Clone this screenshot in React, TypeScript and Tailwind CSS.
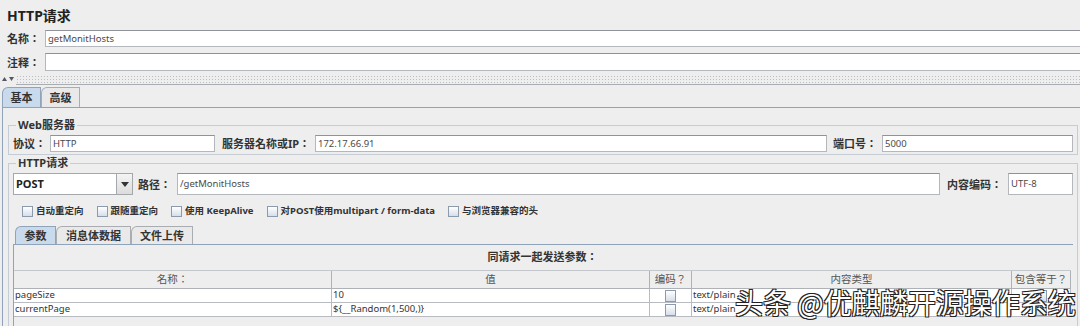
import React from 'react';

const font = "font-['Noto_Sans_CJK_SC','Noto_Sans',sans-serif]";
const latin = "font-['Noto_Sans','Noto_Sans_CJK_SC',sans-serif]";
const tc = "font-['Noto_Sans','Noto_Sans_CJK_TC',sans-serif]";

const Field: React.FC<{ value?: string; className?: string }> = ({ value, className = '' }) => (
    <div className={`h-[17px] bg-white border border-[#b4b8bc] border-t-[#8f9399] flex items-center pl-[2px] text-[9.5px] text-[#4a4a4a] leading-none ${latin} ${className}`}>
        {value}
    </div>
);

const Label: React.FC<{ children: React.ReactNode; className?: string }> = ({ children, className = '' }) => (
    <span className={`text-[11px] font-bold text-[#333] whitespace-nowrap leading-none ${tc} ${className}`}>{children}</span>
);

const Check: React.FC<{ className?: string }> = ({ className = '' }) => (
    <span className={`inline-block w-[11px] h-[11px] border border-[#8c9aab] bg-gradient-to-b from-white to-[#d5dfeb] ${className}`} />
);

const Tab: React.FC<{ label: string; active?: boolean; className?: string }> = ({ label, active, className = '' }) => (
    <div
        className={`h-full flex items-center justify-center border border-b-0 rounded-tl-[6px] text-[11px] font-bold text-[#333] ${
            active ? 'bg-[#c9daec] border-[#8fa3bb]' : 'bg-[#e9e9e9] border-[#a9adb2]'
        } ${className}`}
    >
        {label}
    </div>
);

const options = ['自动重定向', '跟随重定向', '使用 KeepAlive', '对POST使用multipart / form-data', '与浏览器兼容的头'];

const rows = [
    { name: 'pageSize', value: '10', type: 'text/plain' },
    { name: 'currentPage', value: '${__Random(1,500,)}', type: 'text/plain' },
];

const headers = ['名称：', '值', '编码？', '内容类型', '包含等于？'];

const cell = `h-[14px] bg-white border-b border-r border-[#b8bcc0] flex items-center text-[9.5px] text-[#333] ${latin}`;

export default function App() {
    return (
        <div className={`relative w-[1080px] h-[326px] overflow-hidden bg-[#eeeeee] text-[#333] ${font}`}>
            <div className={`pl-[7px] pt-[8px] h-[30px] text-[14px] font-bold leading-[16px] text-[#222] ${latin}`}>HTTP请求</div>

            <div className="flex items-center h-[17px]">
                <Label className="w-[45px] pl-[7px]">名称：</Label>
                <Field className="flex-1 -mr-[4px]" value="getMonitHosts" />
            </div>
            <div className="flex items-center h-[18px] mt-[6px]">
                <Label className="w-[45px] pl-[7px]">注释：</Label>
                <Field className="flex-1 -mr-[4px] h-[18px]" />
            </div>

            {/* splitter */}
            <div className="pt-[4px] h-[15px] flex">
                <div className="w-[16px] flex gap-[2px] pl-[2px] pt-[2px]">
                    <svg width="5" height="4" viewBox="0 0 5 4"><path d="M0 4 L2.5 0 L5 4 Z" fill="#556" /></svg>
                    <svg width="5" height="4" viewBox="0 0 5 4"><path d="M0 0 L5 0 L2.5 4 Z" fill="#556" /></svg>
                </div>
                <div className="flex-1 h-[10px] border-b border-[#a9adb2] bg-[radial-gradient(#b9bec4_0.7px,transparent_0.9px)] bg-[length:3px_3px]" />
            </div>

            <div className="flex items-end h-[20px] pl-[2px] mt-[1px]">
                <Tab label="基本" active className="w-[39px]" />
                <Tab label="高级" className="w-[39px]" />
            </div>

            <div className="ml-[2px] h-[300px] border-t border-l border-[#8fa3bb] bg-[#eeeeee] pt-[10px] pl-[5px] pr-[2px]">
                <fieldset className="border border-[#c6ccd3] px-[4px] pb-[2px]">
                    <legend className={`ml-[3px] px-[2px] h-[14px] leading-[14px] text-[11px] font-bold text-[#333] ${latin}`}>Web服务器</legend>
                    <div className="flex items-center h-[17px] mt-[3px]">
                        <Label className="w-[37px]">协议：</Label>
                        <Field className="w-[165px]" value="HTTP" />
                        <Label className="ml-[7px] w-[93px]">服务器名称或IP：</Label>
                        <Field className="w-[512px]" value="172.17.66.91" />
                        <Label className="ml-[6px] w-[49px]">端口号：</Label>
                        <Field className="flex-1" value="5000" />
                    </div>
                </fieldset>

                <fieldset className="mt-[1px] border border-[#c6ccd3] px-[4px] h-[200px]">
                    <legend className={`ml-[3px] px-[2px] h-[14px] leading-[14px] text-[11px] font-bold text-[#333] ${latin}`}>HTTP请求</legend>
                    <div className="flex items-center h-[22px] mt-[3px]">
                        <div className="w-[120px] h-full flex bg-white border border-[#a4a8ad]">
                            <span className={`flex-1 flex items-center pl-[2px] text-[11px] font-bold text-[#222] ${latin}`}>POST</span>
                            <span className="w-[16px] h-full flex items-center justify-center border-l border-[#a4a8ad] bg-gradient-to-b from-[#f4f4f4] to-[#dcdcdc]">
                                <svg width="8" height="5" viewBox="0 0 8 5"><path d="M0 0 L8 0 L4 5 Z" fill="#333" /></svg>
                            </span>
                        </div>
                        <Label className="ml-[5px] w-[39px]">路径：</Label>
                        <Field className="w-[763px] h-[22px]" value="/getMonitHosts" />
                        <Label className="ml-[7px] w-[61px]">内容编码：</Label>
                        <Field className="flex-1 h-[22px]" value="UTF-8" />
                    </div>

                    <div className="flex items-center h-[14px] mt-[9px] pl-[9px] gap-[13px]">
                        {options.map(o => (
                            <div key={o} className="flex items-center gap-[3px]">
                                <Check />
                                <span className={`text-[9.5px] font-bold text-[#333] whitespace-nowrap ${latin}`}>{o}</span>
                            </div>
                        ))}
                    </div>

                    <div className="flex items-end h-[18px] mt-[8px] pl-[2px]">
                        <Tab label="参数" active className="w-[41px]" />
                        <Tab label="消息体数据" className="w-[75px]" />
                        <Tab label="文件上传" className="w-[62px]" />
                    </div>
                    <div className="border-t border-l border-[#8fa3bb] h-[120px] pr-[2px]">
                        <div className={`h-[25px] flex items-center justify-center text-[11px] font-bold text-[#333] ${tc}`}>同请求一起发送参数：</div>
                        <div className="grid grid-cols-[318px_318px_42px_320px_1fr] border-t border-[#c4c8cc]">
                            {headers.map(h => (
                                <div key={h} className={`h-[18px] flex items-center justify-center border-r border-b border-[#aeb2b6] text-[10.5px] text-[#555] ${tc}`}>
                                    {h}
                                </div>
                            ))}
                            {rows.map(r => (
                                <React.Fragment key={r.name}>
                                    <div className={`${cell} pl-[1px]`}>{r.name}</div>
                                    <div className={`${cell} pl-[1px]`}>{r.value}</div>
                                    <div className={`${cell} justify-center`}><Check className="h-[12px]" /></div>
                                    <div className={`${cell} pl-[1px]`}>{r.type}</div>
                                    <div className={`${cell} justify-center`}><Check className="h-[12px]" /></div>
                                </React.Fragment>
                            ))}
                        </div>
                    </div>
                </fieldset>
            </div>

            <div className="absolute left-[735px] top-[288px] text-[28px] leading-[28px] text-white font-['Noto_Sans_CJK_SC',sans-serif] [text-shadow:1px_1px_0_#222,-1px_-1px_0_#222,1px_-1px_0_#222,-1px_1px_0_#222] whitespace-nowrap">
                头条 @优麒麟开源操作系统
            </div>
        </div>
    );
}
